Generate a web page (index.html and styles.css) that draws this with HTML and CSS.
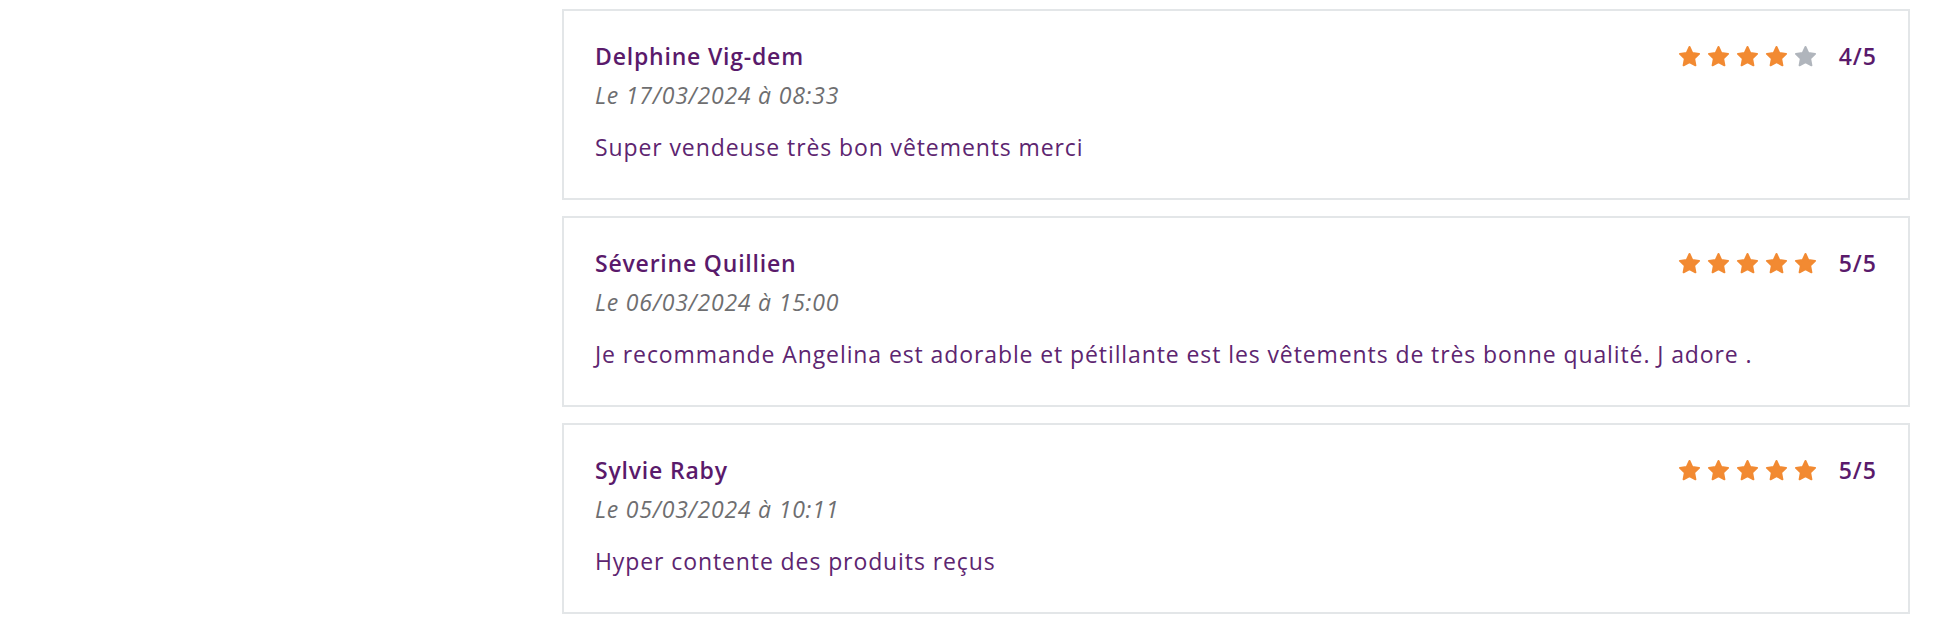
FILE: index.html
```html
<!DOCTYPE html>
<html lang="fr">
  <head>
    <meta name="viewport" content="width=device-width, initial-scale=1">
    <link rel="stylesheet" href="styles.css">
  </head>
  <body>
    <svg width="0" height="0" class="defs">
      <defs>
        <symbol id="star" viewBox="0 0 24 24">
          <path d="M12 2l3 6.4 7 .9-5.1 4.9 1.3 7L12 17.8l-6.2 3.4 1.3-7L2 9.3l7-.9z" stroke-linejoin="round" stroke-width="2" stroke="currentColor" fill="currentColor"/>
        </symbol>
      </defs>
    </svg>
    <div class="page">
      <aside class="side"></aside>
      <main class="reviews">

        <div class="review">
          <div class="head">
            <div class="who">
              <div class="name">Delphine Vig-dem</div>
              <div class="date">Le 17/03/2024 à 08:33</div>
            </div>
            <div class="rating">
              <span class="stars">
                <svg class="star on"><use href="#star"/></svg>
                <svg class="star on"><use href="#star"/></svg>
                <svg class="star on"><use href="#star"/></svg>
                <svg class="star on"><use href="#star"/></svg>
                <svg class="star"><use href="#star"/></svg>
              </span>
              <span class="score">4/5</span>
            </div>
          </div>
          <p class="text">Super vendeuse très bon vêtements merci</p>
        </div>

        <div class="review">
          <div class="head">
            <div class="who">
              <div class="name">Séverine Quillien</div>
              <div class="date">Le 06/03/2024 à 15:00</div>
            </div>
            <div class="rating">
              <span class="stars">
                <svg class="star on"><use href="#star"/></svg>
                <svg class="star on"><use href="#star"/></svg>
                <svg class="star on"><use href="#star"/></svg>
                <svg class="star on"><use href="#star"/></svg>
                <svg class="star on"><use href="#star"/></svg>
              </span>
              <span class="score">5/5</span>
            </div>
          </div>
          <p class="text">Je recommande Angelina est adorable et pétillante est les vêtements de très bonne qualité. J adore .</p>
        </div>

        <div class="review">
          <div class="head">
            <div class="who">
              <div class="name">Sylvie Raby</div>
              <div class="date">Le 05/03/2024 à 10:11</div>
            </div>
            <div class="rating">
              <span class="stars">
                <svg class="star on"><use href="#star"/></svg>
                <svg class="star on"><use href="#star"/></svg>
                <svg class="star on"><use href="#star"/></svg>
                <svg class="star on"><use href="#star"/></svg>
                <svg class="star on"><use href="#star"/></svg>
              </span>
              <span class="score">5/5</span>
            </div>
          </div>
          <p class="text">Hyper contente des produits reçus</p>
        </div>

      </main>
    </div>
  </body>
</html>
```

FILE: styles.css
```css
body {
  margin: 0;
  background: #ffffff;
  font-family: "Open Sans", "Liberation Sans", sans-serif;
  color: #5a1f6d;
}
.defs {
  position: absolute;
}
.page {
  display: grid;
  grid-template-columns: 562px 1fr;
  padding: 9px 36px 0 0;
}
.reviews {
  display: flex;
  flex-direction: column;
  gap: 16px;
}
.review {
  border: 2px solid #e3e6e8;
  padding: 29px 31px 28px 31px;
  height: 191px;
  box-sizing: border-box;
}
.head {
  display: flex;
  justify-content: space-between;
  align-items: flex-start;
}
.name {
  font-size: 23px;
  font-weight: 600;
  line-height: 32px;
  letter-spacing: 0.8px;
  color: #5a1a6b;
}
.date {
  font-size: 23px;
  font-style: italic;
  line-height: 32px;
  letter-spacing: 0.8px;
  margin-top: 7px;
  color: #6e6e70;
}
.rating {
  display: flex;
  align-items: center;
  gap: 22px;
  height: 32px;
}
.stars {
  display: flex;
  gap: 6px;
}
.star {
  width: 23px;
  height: 23px;
  color: #b0b5bc;
}
.star.on {
  color: #f28a32;
}
.score {
  font-size: 23px;
  font-weight: 600;
  letter-spacing: 1px;
  color: #5a1a6b;
}
.text {
  margin: 20px 0 0;
  font-size: 23px;
  line-height: 32px;
  letter-spacing: 0.9px;
  color: #5d2570;
}
```
